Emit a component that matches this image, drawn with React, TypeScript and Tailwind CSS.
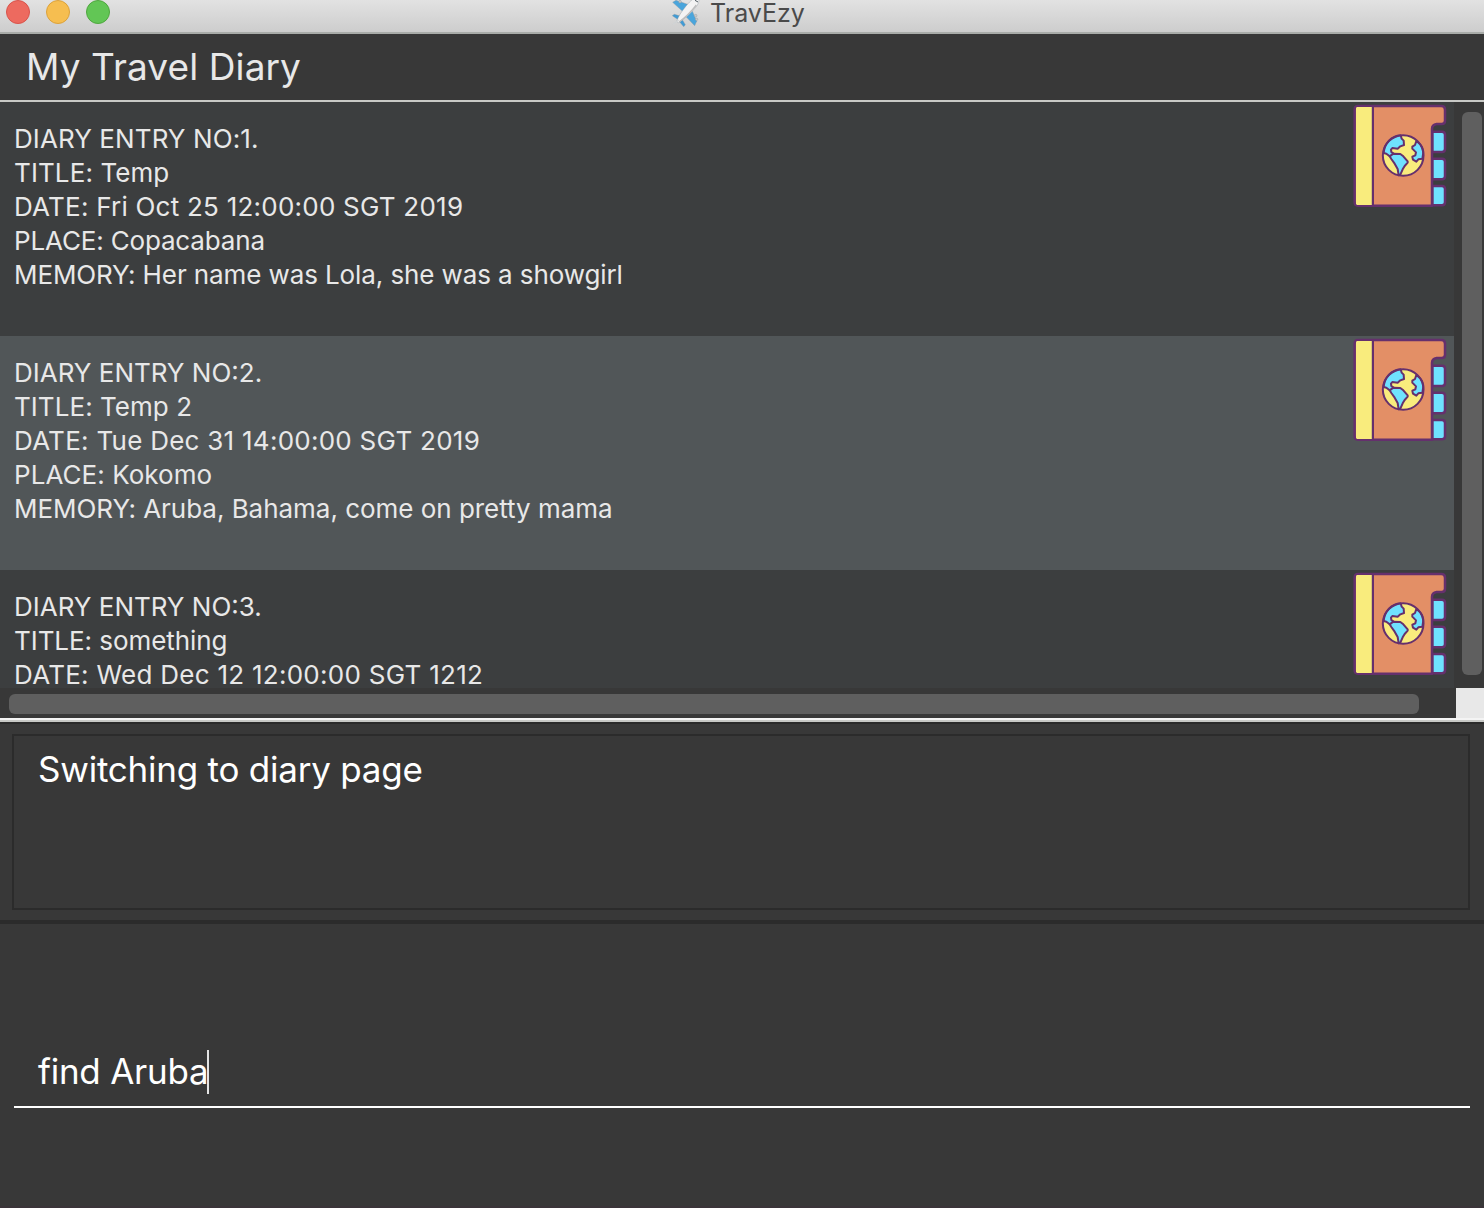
import React from "react";

type Line = { text: string; tracking: string };
type Entry = { lines: Line[]; selected?: boolean };

const entries: Entry[] = [
  {
    lines: [
      { text: "DIARY ENTRY NO:1.", tracking: "tracking-[0.1px]" },
      { text: "TITLE: Temp", tracking: "tracking-[0.1px]" },
      { text: "DATE: Fri Oct 25 12:00:00 SGT 2019", tracking: "tracking-[0.23px]" },
      { text: "PLACE: Copacabana", tracking: "tracking-[-0.16px]" },
      { text: "MEMORY: Her name was Lola, she was a showgirl", tracking: "tracking-[-0.1px]" },
    ],
  },
  {
    selected: true,
    lines: [
      { text: "DIARY ENTRY NO:2.", tracking: "tracking-[0px]" },
      { text: "TITLE: Temp 2", tracking: "tracking-[0.05px]" },
      { text: "DATE: Tue Dec 31 14:00:00 SGT 2019", tracking: "tracking-[0.26px]" },
      { text: "PLACE: Kokomo", tracking: "tracking-[0.06px]" },
      { text: "MEMORY: Aruba, Bahama, come on pretty mama", tracking: "tracking-[-0.03px]" },
    ],
  },
  {
    lines: [
      { text: "DIARY ENTRY NO:3.", tracking: "tracking-[0px]" },
      { text: "TITLE: something", tracking: "tracking-[-0.06px]" },
      { text: "DATE: Wed Dec 12 12:00:00 SGT 1212", tracking: "tracking-[0.27px]" },
    ],
  },
];

function Plane() {
  return (
    <svg width="30" height="28" viewBox="0 0 90 84" className="block shrink-0">
      <g stroke="#8a959c" strokeWidth="1.2">
        <path d="M8 7 L18 1 L56 14 L40 36 Z" fill="#4aa5dc" />
        <path d="M64 26 L80 64 L74 77 L44 46 Z" fill="#4aa5dc" />
        <path d="M7 47 L13 43 L34 49 L26 60 Z" fill="#3f9bd6" />
        <path d="M36 58 L46 74 L41 80 L26 62 Z" fill="#3f9bd6" />
        <circle cx="30" cy="5" r="4" fill="#c9c9c9" />
        <circle cx="77" cy="47" r="4" fill="#c9c9c9" />
        <circle cx="80" cy="58" r="3.5" fill="#c9c9c9" />
        <path d="M20 65 C24 49 38 30 54 11 C65 -1 76 -9 83 -7 C90 -3 87 9 79 20 C63 39 43 57 26 68 Z" fill="#f3f3f3" />
      </g>
      <path d="M27 66 C44 54 64 35 79 15" stroke="#bcbcbc" strokeWidth="4" fill="none" />
      <path d="M9 73 L26 60" stroke="#cfd3d5" strokeWidth="4" />
      <path d="M75 1 L84 6" stroke="#4d5961" strokeWidth="3" />
    </svg>
  );
}

function DiaryIcon() {
  return (
    <svg width="96" height="108" viewBox="36 18 288 324" className="mr-[6px] block shrink-0">
      <g stroke="#65306d" strokeWidth="7.500" strokeLinejoin="round" strokeLinecap="round">
        <path d="M277 107 H306 Q315 107 315 116 V159 Q315 168 306 168 H277 Z" fill="#6fe2ff" />
        <path d="M277 188 H306 Q315 188 315 197 V241 Q315 250 306 250 H277 Z" fill="#6fe2ff" />
        <path d="M277 270 H306 Q315 270 315 279 V319 Q315 328 306 328 H277 Z" fill="#6fe2ff" />
        <path
          d="M54 30 H304 Q315 30 315 41 V74 Q315 84 305 84 H290 Q276 86 276 99 V329 H54 Q44 329 44 319 V41 Q44 30 54 30 Z"
          fill="#e38f66"
        />
      </g>
      <path d="M52 33 H98 V327 H52 Q48 327 48 322 V38 Q48 33 52 33 Z" fill="#f9ec7d" />
      <path d="M95 33 V327" stroke="#cfbf76" strokeWidth="3" />
      <path d="M99 30 V330" stroke="#65306d" strokeWidth="6" />
      <circle cx="189.500" cy="178.500" r="61" fill="#f9ec7d" />
      <g stroke="#65306d" strokeWidth="6" strokeLinejoin="round" strokeLinecap="round">
        <path
          d="M131 171 C134 140 155 120 182 118 L185 128 L191 134 L192 147 L181 151 L173 158 L157 156 L153 161 L154 168 L160 172 L156 178 L149 181 L139 173 Z"
          fill="#6fe2ff"
        />
        <path d="M160 173 L181 174 L190 181 L203 196 L203 200 L194 210 L188 220 L181 236 L176 238 L173 219 L164 203 L154 189 L149 181 Z" fill="#6fe2ff" />
        <path
          d="M229 135 L225 147 L217 152 L217 158 L228 169 L226 178 L217 182 L219 191 L229 197 L235 190 L247 188 C254 165 246 146 229 135 Z"
          fill="#6fe2ff"
        />
        <circle cx="189.500" cy="178.500" r="61" fill="none" />
      </g>
    </svg>
  );
}

function EntryRow({ entry }: { entry: Entry }) {
  const bg = entry.selected ? "bg-[#515658]" : "bg-[#3c3e3f]";
  return (
    <div className={`flex h-[234px] w-full shrink-0 items-start justify-between ${bg}`}>
      <div className="pt-5 pl-[14px] text-[26px] leading-[34px] text-[#e8e8e8]">
        {entry.lines.map((line) => (
          <p key={line.text} className={`whitespace-nowrap ${line.tracking}`}>
            {line.text}
          </p>
        ))}
      </div>
      <DiaryIcon />
    </div>
  );
}

export default function App() {
  return (
    <div className="flex h-[1208px] w-[1484px] flex-col overflow-hidden border-b-2 border-[#3a3439] bg-[#383838] font-['Inter',sans-serif]">
      <header className="grid h-[34px] shrink-0 grid-cols-[1fr_auto_1fr] items-start border-b-2 border-[#a9aca9] bg-linear-to-b from-[#e2e2e2] to-[#cdcdcd]">
        <div className="flex gap-4 pl-[6px]">
          <span className="size-6 rounded-full border border-[#d9534b] bg-[#ed6a5f]" />
          <span className="size-6 rounded-full border border-[#dca23b] bg-[#f6be50]" />
          <span className="size-6 rounded-full border border-[#4fa73f] bg-[#62c655]" />
        </div>
        <div className="flex items-start gap-[10px] pr-[9px]">
          <Plane />
          <h1 className="text-[25px] leading-[26px] text-[#4a4a4a]">TravEzy</h1>
        </div>
        <div />
      </header>

      <div className="flex h-[68px] shrink-0 items-center border-b-2 border-[#c8c9c6] pl-[26px]">
        <h2 className="text-[37px] leading-[44px] tracking-[0.1px] text-[#e8e8e8]">My Travel Diary</h2>
      </div>

      <main className="flex h-[586px] shrink-0">
        <div className="flex w-[1454px] flex-col overflow-hidden">
          {entries.map((entry) => (
            <EntryRow key={entry.lines[0].text} entry={entry} />
          ))}
        </div>
        <div className="flex-1 pt-[10px] pl-2">
          <div className="h-[563px] w-5 rounded-md bg-[#5f5f5f]" />
        </div>
      </main>
      <div className="flex h-[30px] shrink-0 justify-between">
        <div className="mt-[6px] ml-[9px] h-5 w-[1410px] rounded-md bg-[#5f5f5f]" />
        <div className="w-7 bg-[#e8e8e8]" />
      </div>
      <div className="h-1 shrink-0 border-t-2 border-b-2 border-t-[#f4f4f4] border-b-[#c8c9c6]" />

      <section className="h-[202px] shrink-0 border-t-2 border-b-4 border-[#2b2b2b] pt-[10px] pr-[14px] pl-3">
        <div className="h-[176px] border-2 border-[#2b2b2b] pt-[11px] pl-6">
          <p className="text-[35px] leading-[44px] tracking-[-0.23px] text-white">Switching to diary page</p>
        </div>
      </section>

      <section className="pt-[125px] pr-[14px] pl-[14px]">
        <div className="flex h-[59px] items-start border-b-2 border-white pl-6">
          <span className="text-[35px] leading-[44px] tracking-[-0.25px] text-white">find Aruba</span>
          <span className="mt-px -ml-[1px] h-[44px] w-[2px] bg-[#e4e4e4]" />
        </div>
      </section>
    </div>
  );
}
